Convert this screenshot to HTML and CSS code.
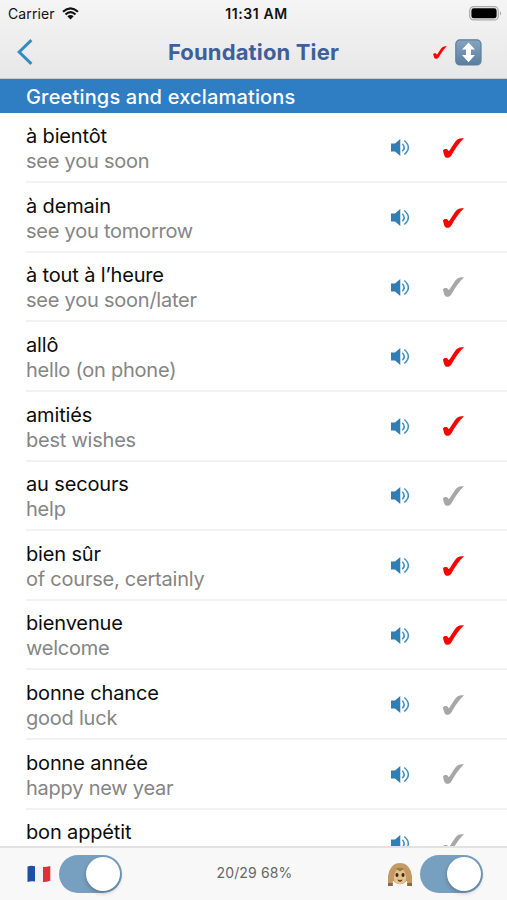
FILE: index.html
```
<!DOCTYPE html>
<html lang="en">
<head>
<meta charset="utf-8">
<title>Foundation Tier</title>
<link rel="stylesheet" href="styles.css">
</head>
<body>
<svg class="defs" aria-hidden="true">
  <defs>
    <symbol id="check" viewBox="0 0 21 20"><path d="M.1 13.200C-.3 11.200 2.200 10.700 3.600 11.100C5 11.500 5 13.200 5.900 13C6.800 12.700 10.700 5.500 13.300 2.500C15.200 .3 18 .2 21 .2C16.400 4.200 12.400 10.600 8.500 17.200C7.300 19.200 5.900 19.800 4.300 19.800C1.800 19.700 1.100 17.500 .1 13.200Z" fill="currentColor"/></symbol>
    <symbol id="speaker" viewBox="0 0 19 17"><path d="M0 4.500H4V12.500H0ZM4 4.500L9.300 0V17L4 12.500Z" fill="#2f7fb5"/><path d="M11.300 4.700Q15 8.500 11.300 12.300M13.300 1.500Q21.400 8.500 13.300 15.500" fill="none" stroke="#4293c4" stroke-width="1.600"/></symbol>
  </defs>
</svg>
<div class="screen">
  <header class="top">
    <div class="status">
      <div class="carrier"><span>Carrier</span>
        <svg width="17" height="13" viewBox="0 0 17 13"><path d="M1 4.8Q8.5-2 16 4.8M3.5 7.5Q8.5 2.9 13.5 7.5" fill="none" stroke="#111" stroke-width="2.2"/><path d="M5.3 9.3Q8.5 6.6 11.7 9.3L8.5 12.5Z" fill="#111"/></svg>
      </div>
      <div class="clock">11:31 AM</div>
      <svg class="battery" width="33" height="15" viewBox="0 0 33 15"><rect x=".7" y=".7" width="28.6" height="13.2" rx="4" fill="#eee" stroke="#aaa" stroke-width="1.2"/><rect x="2.4" y="2.3" width="25.2" height="10" rx="2.4"/><path d="M31 5Q33 7.3 31 9.6Z" fill="#999"/></svg>
    </div>
    <div class="nav">
      <svg class="back" width="16" height="26" viewBox="0 0 16 26"><path d="M14.4 1.2L2.2 13L14.4 24.8" fill="none" stroke="#368bc1" stroke-width="3"/></svg>
      <h1>Foundation Tier</h1>
      <div class="tools">
        <svg class="on" width="14" height="13"><use href="#check"/></svg>
        <svg width="27" height="27" viewBox="0 0 27 27"><defs><linearGradient id="g" x2="0" y2="1"><stop stop-color="#86a4bf"/><stop offset="1" stop-color="#587e9f"/></linearGradient></defs><rect x=".8" y=".8" width="25.2" height="25.2" rx="4.3" fill="url(#g)" stroke="#607f9c" stroke-width="1.2"/><path d="M13.5 3.6L20 10.6H16V16H20L13.5 23.3L7 16H11V10.6H7Z" fill="#fff"/></svg>
      </div>
    </div>
  </header>
  <h2>Greetings and exclamations</h2>
  <main>
    <div class="row"><div class="words"><b>à bientôt</b><span>see you soon</span></div><svg class="speaker"><use href="#speaker"/></svg><svg class="check on"><use href="#check"/></svg></div>
    <div class="row"><div class="words"><b>à demain</b><span>see you tomorrow</span></div><svg class="speaker"><use href="#speaker"/></svg><svg class="check on"><use href="#check"/></svg></div>
    <div class="row"><div class="words"><b>à tout à l’heure</b><span>see you soon/later</span></div><svg class="speaker"><use href="#speaker"/></svg><svg class="check"><use href="#check"/></svg></div>
    <div class="row"><div class="words"><b>allô</b><span>hello (on phone)</span></div><svg class="speaker"><use href="#speaker"/></svg><svg class="check on"><use href="#check"/></svg></div>
    <div class="row"><div class="words"><b>amitiés</b><span>best wishes</span></div><svg class="speaker"><use href="#speaker"/></svg><svg class="check on"><use href="#check"/></svg></div>
    <div class="row"><div class="words"><b>au secours</b><span>help</span></div><svg class="speaker"><use href="#speaker"/></svg><svg class="check"><use href="#check"/></svg></div>
    <div class="row"><div class="words"><b>bien sûr</b><span>of course, certainly</span></div><svg class="speaker"><use href="#speaker"/></svg><svg class="check on"><use href="#check"/></svg></div>
    <div class="row"><div class="words"><b>bienvenue</b><span>welcome</span></div><svg class="speaker"><use href="#speaker"/></svg><svg class="check on"><use href="#check"/></svg></div>
    <div class="row"><div class="words"><b>bonne chance</b><span>good luck</span></div><svg class="speaker"><use href="#speaker"/></svg><svg class="check"><use href="#check"/></svg></div>
    <div class="row"><div class="words"><b>bonne année</b><span>happy new year</span></div><svg class="speaker"><use href="#speaker"/></svg><svg class="check"><use href="#check"/></svg></div>
    <div class="row"><div class="words"><b>bon appétit</b></div><svg class="speaker"><use href="#speaker"/></svg><svg class="check"><use href="#check"/></svg></div>
  </main>
  <footer>
    <svg class="flag" width="24" height="18" viewBox="0 0 24 18"><path d="M.5 1.5Q4 .3 8 1.2V16.4Q4 15.8 .5 17Z" fill="#1d4fa3"/><path d="M8 1.2Q12 2.4 16 2V17Q12 17.3 8 16.4Z" fill="#f2f2f4"/><path d="M16 2Q20 2 23.3 .9V15.8Q20 17 16 17Z" fill="#df3038"/></svg>
    <div class="switch"><i></i></div>
    <div class="score">20/29 68%</div>
    <svg class="monkey" width="26" height="25" viewBox="0 0 26 25"><path d="M2 12C3 4 8 1 13 1S23 4 24 12L20 19H6Z" fill="#c39c66"/><ellipse cx="13" cy="14" rx="8.2" ry="8.3" fill="#a5783f"/><path d="M6.500 12C6.500 7 11 7.300 13 9.500C15 7.300 19.500 7 19.500 12C19.500 14 19.500 15 19.500 17C19 21 16 22 13 22S7 21 6.500 17Z" fill="#e3c28b"/><path d="M1 24V14Q2 6 8 4Q11 4 9 9Q6 14 5.500 24ZM25 24V14Q24 6 18 4Q15 4 17 9Q20 14 20.500 24Z" fill="#c39a63"/><path d="M1 24V21H5.800V24ZM20.200 24V21H25V24Z" fill="#8c6745"/><ellipse cx="10" cy="13" rx="1.500" ry="2" fill="#38251c"/><ellipse cx="16" cy="13" rx="1.500" ry="2" fill="#38251c"/><path d="M10.500 17.500Q13 18.400 15.500 17.500Q15 19.800 13 19.800T10.500 17.500Z" fill="#773c2c"/></svg>
    <div class="switch"><i></i></div>
  </footer>
</div>
</body>
</html>
```
FILE: styles.css
```
* { box-sizing: border-box; }
body { margin: 0; font-family: Inter, "Liberation Sans", sans-serif; color: #111; background: #fff; }
svg { display: block; flex: none; }
.defs { position: absolute; width: 0; height: 0; }
.screen { width: 507px; height: 900px; display: flex; flex-direction: column; overflow: hidden; }
.top { height: 79px; flex: none; background: linear-gradient(#f5f5f5, #e7e7e7); border-bottom: 1px solid #c7c9cc; }
.status { height: 27px; display: grid; grid-template-columns: 1fr auto 1fr; align-items: center; padding: 0 5px 0 8px; }
.carrier { display: flex; gap: 7px; align-items: center; font-size: 14px; letter-spacing: .1px; }
.clock { font-size: 14px; font-weight: 600; letter-spacing: .6px; padding-left: 3px; }
.battery { justify-self: end; }
.nav { height: 50px; display: grid; grid-template-columns: 1fr auto 1fr; align-items: center; padding: 0 25px 0 17px; }
h1 { margin: 0 0 1px; padding-left: 8px; font-size: 22px; line-height: 28px; font-weight: 700; color: #3f5f9a; letter-spacing: .15px; }
.tools { display: flex; justify-content: flex-end; align-items: center; gap: 8px; }
.on { color: #fe0000; }
h2 { height: 34px; flex: none; margin: 0; padding: 0 26px; background: #2f7dc2; color: #fff; font-size: 20px; line-height: 36px; font-weight: 500; letter-spacing: .17px; }
main { flex: 1; min-height: 0; overflow: hidden; padding-top: .6px; }
.row { height: 69.62px; margin-left: 26px; padding: 1px 44px 0 0; display: flex; align-items: center; border-bottom: 2px solid #f2f2f2; }
.words { flex: 1; height: 50px; display: flex; flex-direction: column; font-size: 20px; line-height: 25px; margin-top: 2.4px; letter-spacing: -.23px; }
.words b { font-weight: 400; color: #0c0c0c; letter-spacing: -.15px; }
.words span { color: #858585; }
.speaker { width: 19px; height: 17px; margin-right: 33px; }
.check { width: 21px; height: 20px; margin-right: -1px; }
.check:not(.on) { color: #a7a7a7; }
footer { height: 54px; flex: none; display: flex; align-items: center; background: #f8f8f8; border-top: 2px solid #e2e2e2; padding: 0 24px 0 27px; }
.flag { margin-right: 8px; }
.switch { width: 63px; height: 38px; flex: none; border-radius: 19px; background: #779fbf; padding: 2px; display: flex; justify-content: flex-end; }
.switch i { width: 34px; height: 34px; border-radius: 50%; background: #fff; box-shadow: 0 2px 4px rgba(0,0,0,.25); }
.score { flex: 1; text-align: center; font-size: 14px; line-height: 16px; margin-bottom: 2px; letter-spacing: .15px; color: #666; }
.monkey { margin-right: 7px; }
```
